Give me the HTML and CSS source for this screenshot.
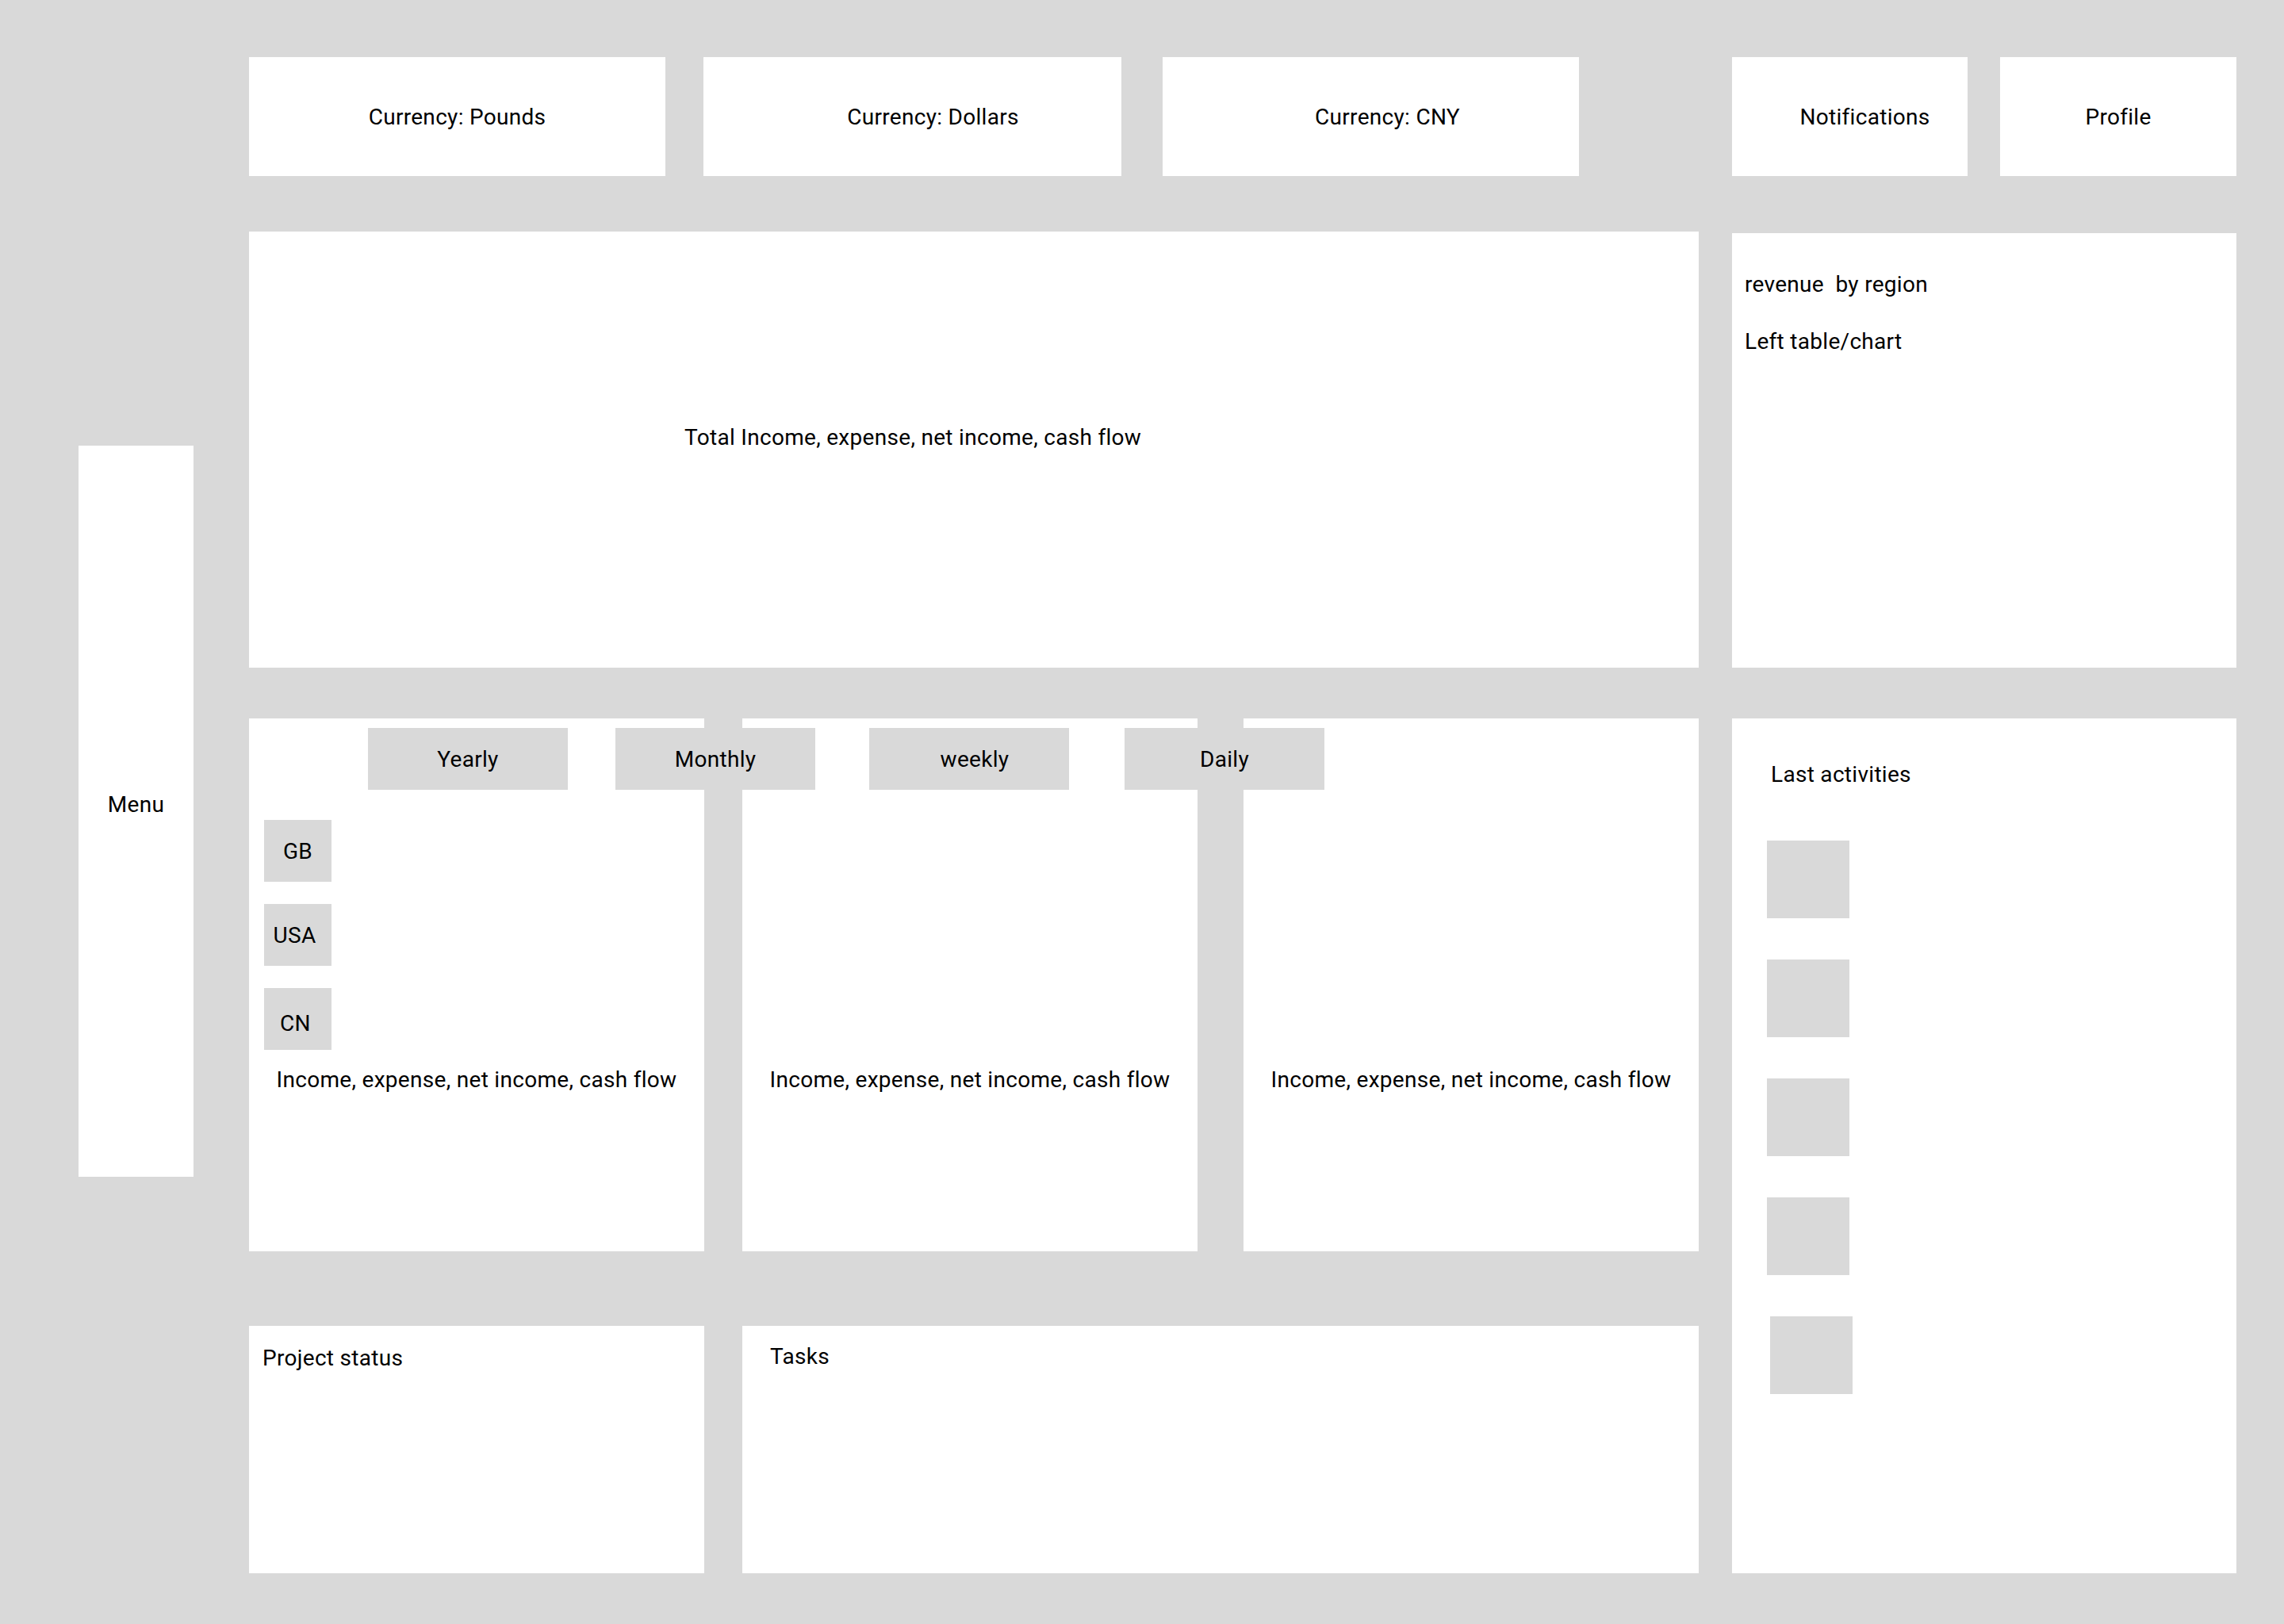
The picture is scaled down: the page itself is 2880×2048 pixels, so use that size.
FILE: index.html
```html
<!DOCTYPE html>
<html lang="en">
<head>
<meta charset="utf-8">
<title>Dashboard wireframe</title>
<link rel="stylesheet" href="styles.css">
</head>
<body>
<div class="page">
  <nav class="box menu">Menu</nav>

  <header class="currencies">
    <div class="box cur cur-pounds">Currency: Pounds</div>
    <div class="box cur cur-dollars">Currency: Dollars</div>
    <div class="box cur cur-cny">Currency: CNY</div>
  </header>

  <div class="user">
    <div class="box user-btn notif">Notifications</div>
    <div class="box user-btn profile">Profile</div>
  </div>

  <section class="box total">
    <p class="total-text">Total Income, expense, net income, cash flow</p>
  </section>

  <section class="box revenue">
    <p class="rev-title">revenue&nbsp; by region</p>
    <p class="rev-sub">Left table/chart</p>
  </section>

  <section class="periods">
    <div class="box card card-1">
      <div class="regions">
        <div class="region">GB</div>
        <div class="region region-usa">USA</div>
        <div class="region region-cn">CN</div>
      </div>
      <p class="card-text">Income, expense, net income, cash flow</p>
    </div>
    <div class="box card card-2">
      <p class="card-text">Income, expense, net income, cash flow</p>
    </div>
    <div class="box card card-3">
      <p class="card-text">Income, expense, net income, cash flow</p>
    </div>
    <div class="tabs">
      <div class="tab">Yearly</div>
      <div class="tab tab-monthly">Monthly</div>
      <div class="tab tab-weekly">weekly</div>
      <div class="tab tab-daily">Daily</div>
    </div>
  </section>

  <section class="box activities">
    <p class="act-title">Last activities</p>
    <ul class="act-list">
      <li class="act-item"></li>
      <li class="act-item"></li>
      <li class="act-item"></li>
      <li class="act-item"></li>
      <li class="act-item act-item-last"></li>
    </ul>
  </section>

  <section class="bottom">
    <div class="box project">Project status</div>
    <div class="box tasks">Tasks</div>
  </section>
</div>
</body>
</html>
```

FILE: styles.css
```css
html, body {
  margin: 0;
  padding: 0;
  background: #d9d9d9;
}

body {
  width: 2880px;
  height: 2048px;
  overflow: hidden;
  font-family: Roboto, "Liberation Sans", Arial, sans-serif;
  font-size: 28px;
  font-weight: 400;
  letter-spacing: 0.3px;
  line-height: 33px;
  color: #000;
}

p {
  margin: 0;
}

.page {
  box-sizing: border-box;
  padding: 72px 0 0 99px;
  display: grid;
  grid-template-columns: 145px 70px 1828px 42px 636px;
  grid-template-rows: 150px 70px 550px 64px 672px 94px 312px;
}

.box {
  background: #fff;
  box-sizing: border-box;
}

/* Sidebar menu */
.menu {
  grid-column: 1;
  grid-row: 1 / 8;
  align-self: start;
  margin-top: 490px;
  height: 922px;
  display: flex;
  align-items: center;
  justify-content: center;
  padding-bottom: 18px;
}

/* Top currency boxes */
.currencies {
  grid-column: 3;
  grid-row: 1;
  display: flex;
}

.cur {
  height: 150px;
  display: flex;
  align-items: center;
  justify-content: center;
}

.cur-pounds {
  width: 525px;
}

.cur-dollars {
  width: 527px;
  margin-left: 48px;
  padding-left: 52px;
}

.cur-cny {
  width: 525px;
  margin-left: 52px;
  padding-left: 42px;
}

/* Notifications / profile */
.user {
  grid-column: 5;
  grid-row: 1;
  display: flex;
}

.user-btn {
  height: 150px;
  display: flex;
  align-items: center;
  justify-content: center;
}

.notif {
  width: 297px;
  padding-left: 38px;
}

.profile {
  width: 298px;
  margin-left: 41px;
}

/* Total panel */
.total {
  grid-column: 3;
  grid-row: 3;
  padding: 243px 0 0 549px;
}

/* Revenue panel */
.revenue {
  grid-column: 5;
  grid-row: 3;
  margin-top: 2px;
  padding: 48px 16px 0 16px;
}

.rev-sub {
  margin-top: 39px;
}

/* Period cards */
.periods {
  grid-column: 3;
  grid-row: 5;
  position: relative;
  display: flex;
}

.card {
  width: 574px;
  height: 672px;
  padding-top: 439px;
}

.card-1 {
  padding-top: 128px;
}

.card-2 {
  margin-left: 48px;
}

.card-3 {
  margin-left: 58px;
}

.card-text {
  text-align: center;
}

.regions {
  display: flex;
  flex-direction: column;
  gap: 28px;
  padding-left: 19px;
  margin-bottom: 21px;
}

.region {
  width: 85px;
  height: 78px;
  background: #d9d9d9;
  display: flex;
  align-items: center;
  justify-content: center;
  box-sizing: border-box;
}

.region-usa {
  padding-right: 8px;
}

.region-cn {
  padding-right: 6px;
  padding-top: 10px;
}

.tabs {
  position: absolute;
  top: 12px;
  left: 150px;
  display: flex;
}

.tab {
  width: 252px;
  height: 78px;
  background: #d9d9d9;
  display: flex;
  align-items: center;
  justify-content: center;
  box-sizing: border-box;
}

.tab-monthly {
  margin-left: 60px;
}

.tab-weekly {
  margin-left: 68px;
  padding-left: 14px;
}

.tab-daily {
  margin-left: 70px;
}

/* Last activities */
.activities {
  grid-column: 5;
  grid-row: 5 / 8;
  padding: 54px 0 0 44px;
}

.act-title {
  margin-left: 5px;
}

.act-list {
  list-style: none;
  margin: 67px 0 0 0;
  padding: 0;
  display: flex;
  flex-direction: column;
  gap: 52px;
}

.act-item {
  width: 104px;
  height: 98px;
  background: #d9d9d9;
}

.act-item-last {
  margin-left: 4px;
}

/* Bottom row */
.bottom {
  grid-column: 3;
  grid-row: 7;
  display: flex;
}

.project {
  width: 574px;
  padding: 24px 17px;
}

.tasks {
  flex: 1;
  margin-left: 48px;
  padding: 22px 35px;
}
```
